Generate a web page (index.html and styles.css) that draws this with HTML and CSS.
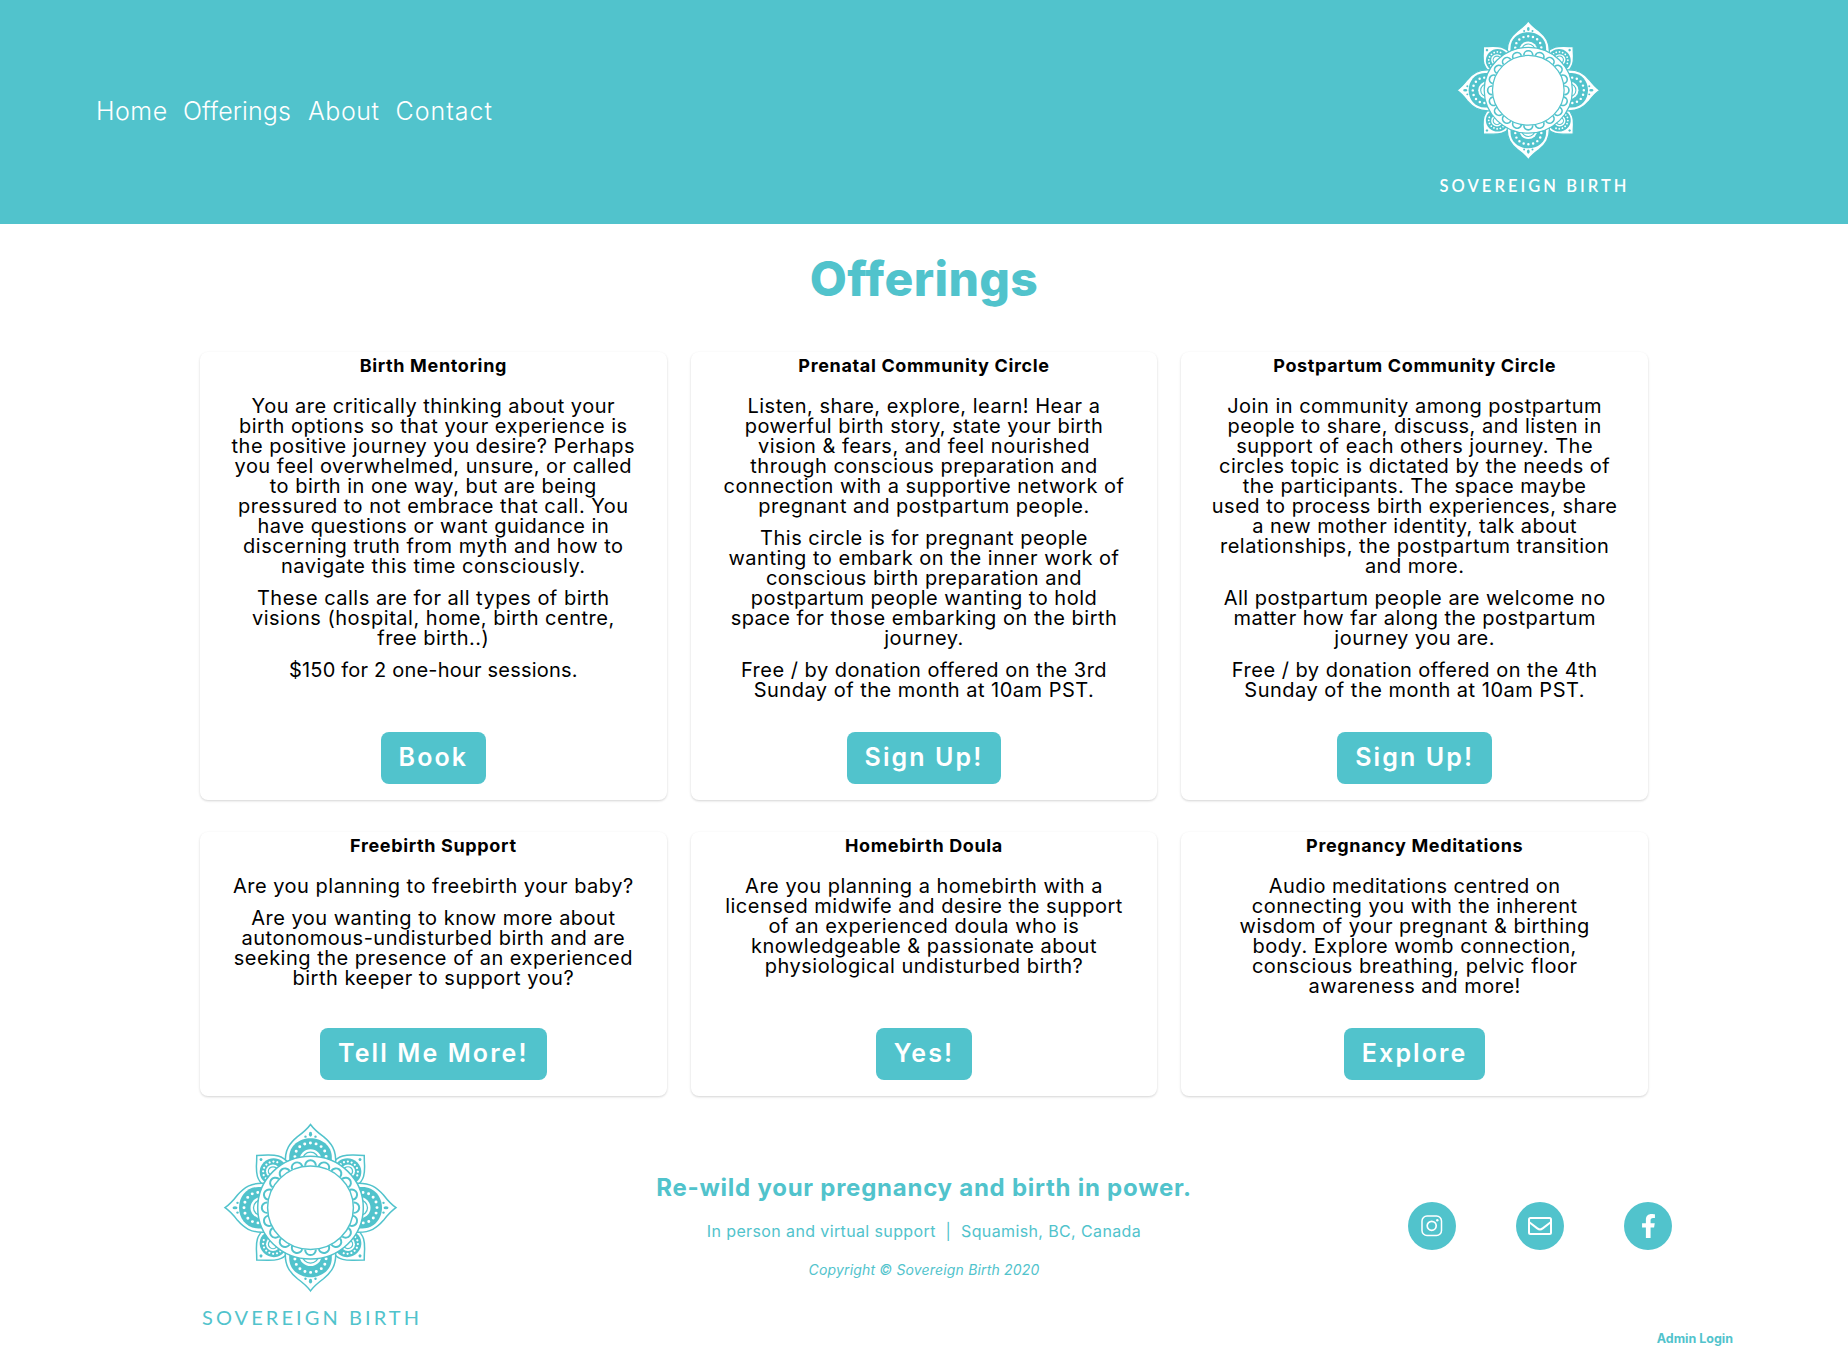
FILE: index.html
```html
<!DOCTYPE html>
<html lang="en">
<head>
<meta charset="utf-8">
<title>Offerings | Sovereign Birth</title>
<link rel="stylesheet" href="styles.css">
</head>
<body>
<svg class="defs" width="0" height="0" aria-hidden="true">
  <defs>
    <g id="petal">
      <path class="leaf" d="M-25 -44C-26.500 -60 -20 -67 -13 -73C-7 -77.500 -3.500 -80.500 0 -85.500C3.500 -80.500 7 -77.500 13 -73C20 -67 26.500 -60 25 -44Z"/>
      <path class="dome" d="M-21.300 -44V-52C-21.300 -64 -11 -71.500 0 -71.500S21.300 -64 21.300 -52V-44Z"/>
      <path class="dots" d="M-15.600 -52.500A15.600 14 0 0 1 15.600 -52.500"/>
      <circle class="pale" cy="-49" r="11"/>
      <circle class="arc" cy="-49" r="8"/>
      <ellipse class="dome" cy="-75.500" rx="1.600" ry="2.500"/>
      <circle class="dome" cx="-5" cy="-73" r="1.200"/>
      <circle class="dome" cx="5" cy="-73" r="1.200"/>
    </g>
    <g id="bud">
      <path class="leaf" d="M-17 -48C-18 -59 -12.500 -64 -8 -68.500Q-4 -72 0 -76Q4 -72 8 -68.500C12.500 -64 18 -59 17 -48Z"/>
      <path class="dome" d="M-13.800 -48V-54C-13 -61 -7 -66 0 -66S13 -61 13.800 -54V-48Z"/>
      <path class="dots small" d="M-10.300 -53A10.300 9.500 0 0 1 10.300 -53"/>
      <circle class="pale" cy="-53" r="7"/>
      <circle class="arc" cy="-53" r="4.600"/>
      <circle class="dome" cy="-70" r="1.500"/>
    </g>
    <path id="scallop" class="scallop" d="M-5.300 -43V-43.500A5.300 5.200 0 0 1 5.300 -43.500V-43"/>
    <g id="quarter">
      <use href="#bud" transform="rotate(45)"/>
      <use href="#petal"/>
    </g>
    <g id="fringe">
      <use href="#scallop"/>
      <use href="#scallop" transform="rotate(18)"/>
      <use href="#scallop" transform="rotate(36)"/>
      <use href="#scallop" transform="rotate(54)"/>
      <use href="#scallop" transform="rotate(72)"/>
    </g>
    <g id="mandala">
      <use href="#quarter"/>
      <use href="#quarter" transform="rotate(90)"/>
      <use href="#quarter" transform="rotate(180)"/>
      <use href="#quarter" transform="rotate(270)"/>
      <circle class="ring" r="52.800"/>
      <use href="#fringe"/>
      <use href="#fringe" transform="rotate(90)"/>
      <use href="#fringe" transform="rotate(180)"/>
      <use href="#fringe" transform="rotate(270)"/>
      <circle class="ring" r="42.900"/>
    </g>
  </defs>
</svg>

<header class="site-header">
  <nav class="nav">
    <a>Home</a><a>Offerings</a><a>About</a><a>Contact</a>
  </nav>
  <svg class="brand" width="220" height="200" viewBox="0 0 220 200">
    <use href="#mandala" transform="translate(108.300 80.300) scale(.835 .812)"/>
    <text class="brand-name" x="19.500" y="181.700" textLength="187">SOVEREIGN BIRTH</text>
  </svg>
</header>

<main>
  <h1 class="page-title">Offerings</h1>
  <section class="cards">
    <article class="card">
      <h2>Birth Mentoring</h2>
      <p>You are critically thinking about your<br>birth options so that your experience is<br>the positive journey you desire? Perhaps<br>you feel overwhelmed, unsure, or called<br>to birth in one way, but are being<br>pressured to not embrace that call. You<br>have questions or want guidance in<br>discerning truth from myth and how to<br>navigate this time consciously.</p>
      <p>These calls are for all types of birth<br>visions (hospital, home, birth centre,<br>free birth..)</p>
      <p class="price">$150 for 2 one-hour sessions.</p>
      <div class="action"><a class="button">Book</a></div>
    </article>
    <article class="card">
      <h2>Prenatal Community Circle</h2>
      <p>Listen, share, explore, learn! Hear a<br>powerful birth story, state your birth<br>vision &amp; fears, and feel nourished<br>through conscious preparation and<br>connection with a supportive network of<br>pregnant and postpartum people.</p>
      <p>This circle is for pregnant people<br>wanting to embark on the inner work of<br>conscious birth preparation and<br>postpartum people wanting to hold<br>space for those embarking on the birth<br>journey.</p>
      <p>Free / by donation offered on the 3rd<br>Sunday of the month at 10am PST.</p>
      <div class="action"><a class="button">Sign Up!</a></div>
    </article>
    <article class="card">
      <h2>Postpartum Community Circle</h2>
      <p>Join in community among postpartum<br>people to share, discuss, and listen in<br>support of each others journey. The<br>circles topic is dictated by the needs of<br>the participants. The space maybe<br>used to process birth experiences, share<br>a new mother identity, talk about<br>relationships, the postpartum transition<br>and more.</p>
      <p>All postpartum people are welcome no<br>matter how far along the postpartum<br>journey you are.</p>
      <p>Free / by donation offered on the 4th<br>Sunday of the month at 10am PST.</p>
      <div class="action"><a class="button">Sign Up!</a></div>
    </article>
    <article class="card">
      <h2>Freebirth Support</h2>
      <p>Are you planning to freebirth your baby?</p>
      <p>Are you wanting to know more about<br>autonomous-undisturbed birth and are<br>seeking the presence of an experienced<br>birth keeper to support you?</p>
      <div class="action"><a class="button">Tell Me More!</a></div>
    </article>
    <article class="card">
      <h2>Homebirth Doula</h2>
      <p>Are you planning a homebirth with a<br>licensed midwife and desire the support<br>of an experienced doula who is<br>knowledgeable &amp; passionate about<br>physiological undisturbed birth?</p>
      <div class="action"><a class="button">Yes!</a></div>
    </article>
    <article class="card">
      <h2>Pregnancy Meditations</h2>
      <p>Audio meditations centred on<br>connecting you with the inherent<br>wisdom of your pregnant &amp; birthing<br>body. Explore womb connection,<br>conscious breathing, pelvic floor<br>awareness and more!</p>
      <div class="action"><a class="button">Explore</a></div>
    </article>
  </section>
</main>

<footer class="site-footer">
  <svg class="footer-logo" width="240" height="230" viewBox="0 0 240 230">
    <use href="#mandala" transform="translate(120.500 97.700) scale(1 .973)"/>
    <text class="footer-name" x="12" y="215.200" textLength="217">SOVEREIGN BIRTH</text>
  </svg>
  <div class="tagline">
    <h3>Re-wild your pregnancy and birth in power.</h3>
    <p class="place">In person and virtual support&nbsp; |&nbsp; Squamish, BC, Canada</p>
    <p class="copyright">Copyright © Sovereign Birth 2020</p>
  </div>
  <div class="aside">
    <div class="social">
      <a class="bubble"><svg width="22" height="22" viewBox="0 0 22 22" fill="none" stroke="#fff"><rect x="1" y="1" width="19.500" height="19.500" rx="5" stroke-width="1.500"/><circle cx="10.700" cy="10.800" r="4.500" stroke-width="1.700"/><circle cx="16.300" cy="5.300" r="1.200" fill="#fff" stroke="none"/></svg></a>
      <a class="bubble"><svg width="24" height="18" viewBox="0 0 24 18" fill="none" stroke="#fff" stroke-width="2"><rect x="1" y="1" width="22" height="16" rx="1.500"/><path d="M1 5L9.300 11.400Q12 13.400 14.700 11.400L23 5"/></svg></a>
      <a class="bubble"><svg width="15" height="24" viewBox="0 0 320 512" fill="#fff"><path d="M279.140 288l14.220-92.660h-88.910v-60.130c0-25.350 12.420-50.060 52.240-50.060h40.420V6.260S260.430 0 225.360 0c-73.220 0-121.080 44.380-121.080 124.720v70.620H22.890V288h81.390v224h100.170V288z"/></svg></a>
    </div>
    <a class="admin">Admin Login</a>
  </div>
</footer>
</body>
</html>
```
FILE: styles.css
```css
:root { --teal: #51c3cc; }

* { box-sizing: border-box; }

body {
  margin: 0;
  background: #fff;
  color: #000;
  font-family: Inter, "Open Sans", sans-serif;
}

h1, h2, h3, p { margin: 0; }

.defs { display: block; height: 0; }

/* Mandala artwork */
.leaf, .ring { fill: #fff; stroke: var(--teal); stroke-width: 1.5; }
.scallop { fill: #fff; stroke: var(--teal); stroke-width: 2; }
.dome { fill: var(--teal); }
.pale { fill: #fff; }
.arc { fill: none; stroke: var(--teal); stroke-width: 1.3; }
.dots { fill: none; stroke: #fff; stroke-width: 3; stroke-linecap: round; stroke-dasharray: 0 5.75; }
.dots.small { stroke-width: 2.2; stroke-dasharray: 0 3.9; }

/* Header */
.site-header {
  display: flex;
  justify-content: space-between;
  align-items: center;
  height: 224px;
  padding: 0 208px 4px 96px;
  background: var(--teal);
}

.nav {
  display: grid;
  grid-template-columns: 87px 125px 87.500px auto;
  padding-top: 1px;
  color: #fff;
  font-size: 25px;
  font-weight: 300;
  letter-spacing: .5px;
}

.nav a:nth-child(2) { letter-spacing: .1px; }
.nav a:nth-child(4) { letter-spacing: 1px; }

.brand-name { fill: #fff; font: 600 16.500px Lato, sans-serif; }

/* Offerings */
.page-title {
  padding-top: 23px;
  height: 128px;
  color: var(--teal);
  font-size: 48px;
  font-weight: 800;
  line-height: 64px;
  letter-spacing: .4px;
  text-align: center;
}

.cards {
  display: grid;
  grid-template-columns: repeat(3, 1fr);
  gap: 32px 24px;
  width: 1448px;
  margin: 0 auto;
}

.card {
  display: flex;
  flex-direction: column;
  padding-bottom: 16px;
  border-radius: 8px;
  box-shadow: 0 1px 3px rgba(0, 0, 0, .1), 0 1px 2px rgba(0, 0, 0, .08);
  text-align: center;
}

.card h2 {
  margin-bottom: 17px;
  font-size: 18px;
  line-height: 27px;
  letter-spacing: .65px;
}

.card p {
  font-size: 20px;
  line-height: 20px;
  letter-spacing: .5px;
  white-space: nowrap;
}

.card p + p { margin-top: 12px; }
.card .price { letter-spacing: .2px; }

.action { margin-top: auto; padding-top: 32px; display: flex; justify-content: center; }

.button {
  padding: 0 18px;
  border-radius: 8px;
  background: var(--teal);
  color: #fff;
  font-size: 25px;
  font-weight: 600;
  line-height: 51px;
  height: 52px;
  letter-spacing: 2.100px;
}

/* Footer */
.site-footer {
  display: grid;
  grid-template-columns: 440px 1fr 440px;
  height: 259px;
  color: var(--teal);
}

.footer-logo { margin: 14px 0 0 190px; }
.footer-name { fill: var(--teal); font: 400 20px Lato, sans-serif; }

.tagline { padding-top: 77px; text-align: center; }
.tagline h3 { font-size: 24px; line-height: 30px; letter-spacing: .75px; }
.place { margin-top: 16px; font-size: 16px; line-height: 24px; letter-spacing: .38px; }
.copyright { margin-top: 17px; font-size: 14px; font-style: italic; line-height: 20px; letter-spacing: .17px; }

.aside { display: flex; flex-direction: column; padding-top: 106px; }
.social { display: flex; gap: 60px; }

.bubble {
  display: flex;
  align-items: center;
  justify-content: center;
  width: 48px;
  height: 48px;
  border-radius: 50%;
  background: var(--teal);
}

.admin {
  align-self: flex-end;
  margin: 80px 115px 0 0;
  font-size: 12.500px;
  font-weight: 700;
  line-height: 18px;
}
```
